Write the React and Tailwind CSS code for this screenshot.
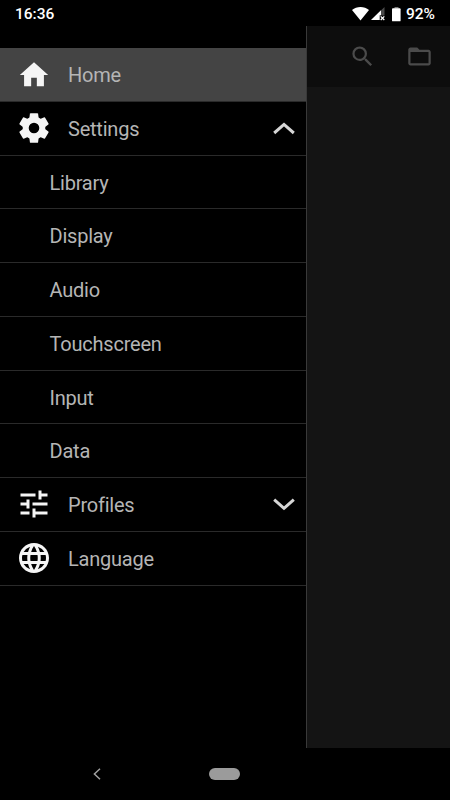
import { MdSearch, MdFolderOpen, MdTune, MdLanguage, MdHome } from 'react-icons/md';

const menuItems = [
  { label: 'Home', icon: 'home', active: true },
  { label: 'Settings', icon: 'settings', chevron: 'up' },
  { label: 'Library' },
  { label: 'Display' },
  { label: 'Audio' },
  { label: 'Touchscreen' },
  { label: 'Input' },
  { label: 'Data' },
  { label: 'Profiles', icon: 'profiles', chevron: 'down' },
  { label: 'Language', icon: 'language' },
];

function GearIcon() {
  return (
    <svg width="36" height="36" viewBox="-18 -18 36 36" fill="currentColor">
      {/* six teeth around a ring */}
      {[0, 60, 120, 180, 240, 300].map((angle) => (
        <path
          key={angle}
          transform={`rotate(${angle})`}
          d="M-3.4 -14.8 H3.4 Q4 -14.8 4.1 -14.2 L4.9 -8 H-4.9 L-4.1 -14.2 Q-4 -14.8 -3.4 -14.8z"
        />
      ))}
      <circle r="8.3" fill="none" stroke="currentColor" strokeWidth="6" />
    </svg>
  );
}

function MenuIcon({ name }) {
  if (name === 'home') return <MdHome className="mt-px" size={34} />;
  if (name === 'settings') return <GearIcon />;
  if (name === 'profiles') return <MdTune size={36} />;
  return <MdLanguage size={36} />;
}

function Chevron({ direction }) {
  return (
    <svg width="22" height="14" viewBox="0 0 22 14" fill="none" stroke="#d6d6d6" strokeWidth="3">
      <path d={direction === 'up' ? 'M1.2 12 L11 3.4 L20.8 12' : 'M1.2 2.7 L11 11.3 L20.8 2.7'} />
    </svg>
  );
}

function MenuRow({ item }) {
  return (
    <li
      className={`flex h-[53.75px] items-center border-b border-[#2a2a2a] pr-[11px] ${item.active ? 'bg-[#444444]' : ''} ${item.icon ? '' : 'pl-[49.5px]'}`}
    >
      {item.icon && (
        <span className="flex w-[68px] shrink-0 justify-center text-[#f5f5f5]">
          <MenuIcon name={item.icon} />
        </span>
      )}
      <span className="flex-1 pt-[1.5px] text-[20px] leading-6 tracking-[-0.22px] text-[#b5b5b5]">{item.label}</span>
      {item.chevron && <Chevron direction={item.chevron} />}
    </li>
  );
}

function StatusBar() {
  return (
    <header className="flex h-[26px] items-center justify-between pt-[2px] pr-[15px] pl-[15px] text-[15.5px] leading-6 font-medium text-white">
      <span>16:36</span>
      <div className="flex items-center">
        {/* wifi */}
        <svg width="17" height="15" viewBox="0 0 17 15" fill="#ffffff">
          <path d="M0 2.9C2.4 1 5.3 0 8.5 0s6.1 1 8.5 2.9L8.5 13.6z" />
        </svg>
        {/* mobile signal without data */}
        <svg className="ml-[2px]" width="15" height="14" viewBox="0 0 15 14">
          <path d="M0 13 L13.5 0 V8.5 H9 V13z" fill="#4a4a4a" />
          <path d="M0 13 L10 3.2 V8.2 H8.6 V13z" fill="#ffffff" />
          <path d="M9.7 9.4 L13.3 13 M13.3 9.4 L9.7 13" stroke="#ffffff" strokeWidth="1.3" />
        </svg>
        {/* battery */}
        <svg className="ml-[6px]" width="9" height="15" viewBox="0 0 9 15">
          <path d="M2.5 0h4v1.7h-4z" fill="#777777" />
          <rect y="1.3" width="8.6" height="13" rx="0.9" fill="#ffffff" />
        </svg>
        <span className="ml-[5px]">92%</span>
      </div>
    </header>
  );
}

function Drawer() {
  return (
    <nav className="w-[307px] border-r border-[#393939] bg-black pt-[22px]">
      <ul>
        {menuItems.map((item) => (
          <MenuRow key={item.label} item={item} />
        ))}
      </ul>
    </nav>
  );
}

function NavigationBar() {
  return (
    <footer className="flex h-[52px] items-center pl-[93px]">
      <svg width="8" height="12" viewBox="0 0 8 12" fill="none" stroke="#a0a0a0" strokeWidth="1.5">
        <path d="M7 0.7 L1.4 6 L7 11.3" />
      </svg>
      <div className="ml-[108px] h-[11.5px] w-[31px] rounded-full bg-[#9b9b9b]"></div>
    </footer>
  );
}

function App() {
  return (
    <div className="flex h-[800px] w-[450px] flex-col overflow-hidden bg-black font-[Roboto,sans-serif]">
      <StatusBar />
      <div className="flex h-[722px]">
        <Drawer />
        <main className="flex-1 bg-[#141414]">
          <div className="flex h-[61px] items-center justify-end gap-[30px] bg-[#0d0d0d] pr-[17px] text-[#4b4b4b]">
            <MdSearch size={27} />
            <MdFolderOpen size={27} />
          </div>
        </main>
      </div>
      <NavigationBar />
    </div>
  );
}

export default App;
